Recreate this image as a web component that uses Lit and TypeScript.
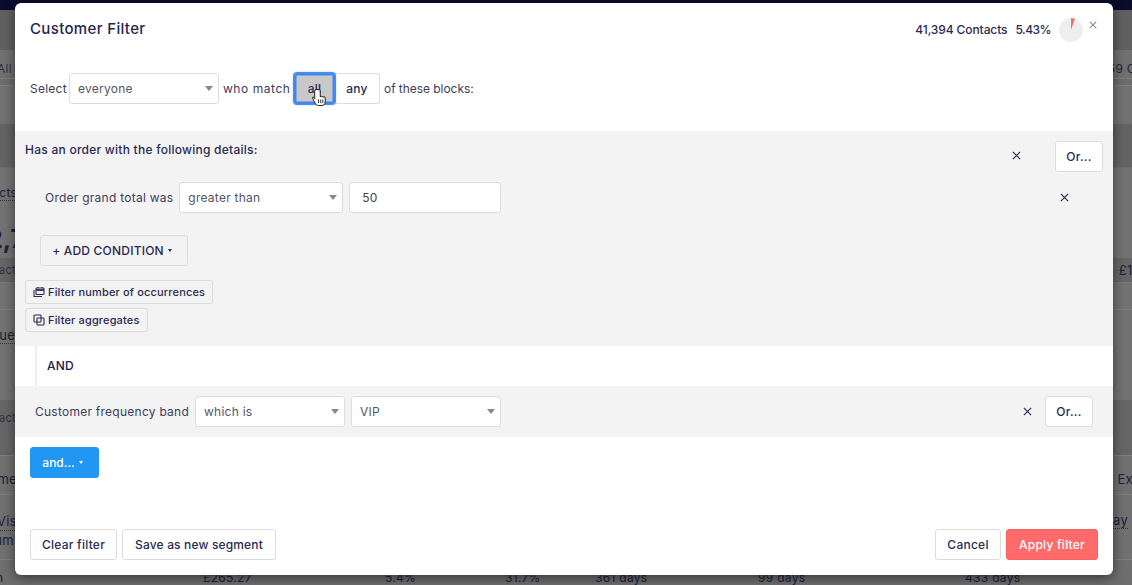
import { LitElement, html, css, svg } from "lit";
import { customElement } from "lit/decorators.js";

const closeIcon = (size = 9) => html`<svg class="x" width=${size} height=${size} viewBox="0 0 10 10"><path d="M1 1 9 9M9 1 1 9" fill="none" stroke="currentColor" stroke-width="1.3"/></svg>`;

@customElement("app-root")
export class AppRoot extends LitElement {
  static styles = css`
    :host { display: block; width: 1132px; height: 585px; overflow: hidden; position: relative; background: #6e6e6e;
      font-family: Inter, "Noto Sans", sans-serif; font-size: 12px; color: #2a2a55; }
    * { box-sizing: border-box; }
    .page { display: flex; flex-direction: column; height: 585px; color: #20203a; font-size: 12px; letter-spacing: .3px; }
    .r { display: flex; justify-content: space-between; align-items: center; flex: none; white-space: nowrap; border-bottom: 1px solid #7f7f7f; }
    .nav { height: 10px; background: #0b0b2b; border: 0; }
    .r1 { height: 40px; background: #606060; border: 0; }
    .r2 { height: 29px; background: #707070; padding-top: 8px; }
    .r3 { height: 7px; background: #6c6c6c; }
    .r4 { height: 38px; background: #727272; border: 0; }
    .r5 { height: 44px; background: #636363; border-color: #6c6c6c; }
    .r6 { height: 42px; background: #727272; padding-top: 8px; border: 0; }
    .r7 { height: 48px; background: #727272; font-size: 25px; font-weight: 700; padding-top: 10px; border: 0; letter-spacing: 0; }
    .r8 { height: 25px; background: #666; font-size: 11px; border-color: #767676; }
    .r9 { height: 27px; background: #727272; }
    .r10 { height: 36px; background: #727272; padding-top: 14px; border: 0; font-size: 13px; }
    .r11 { height: 54px; background: #727272; border: 0; }
    .r12 { height: 36px; background: #666; font-size: 11px; border: 0; }
    .r13 { height: 20px; background: #666; }
    .r14 { height: 39px; background: #707070; font-size: 13px; padding-top: 8px; }
    .r15 { height: 65px; background: #707070; font-size: 13px; align-items: flex-start; padding-top: 17px; }
    .two { display: flex; flex-direction: column; line-height: 18px; }
    .dot { border-bottom: 1px dotted #333; }
    .faint { color: #333340; }
    .l1 { margin-left: -3px; }
    .l2 { margin-left: -36px; }
    .l3 { margin-left: -29px; }
    .l4 { margin-left: -27px; }
    .l5 { margin-left: -40px; }
    .l6 { margin-left: -23px; }
    .l7 { margin-left: -3px; }
    .l8 { margin-left: -27px; }
    .r1c { margin-right: -48px; }
    .r2c { margin-right: -1px; }
    .r3c { margin-right: -30px; font-size: 13px; }
    .r4c { margin-right: 4px; }
    .bottom { display: grid; grid-template-columns: 203px 182px 120px 90px 163px 207px auto; height: 25px; align-items: center; padding-top: 10px; font-size: 12px; }
    .bl { margin-left: -4px; }

    .modal { position: absolute; left: 15px; top: 3px; width: 1098px; height: 572px; background: #fff; border-radius: 6px;
      box-shadow: 0 3px 12px rgba(0,0,0,.5); display: flex; flex-direction: column; font-weight: 400; letter-spacing: .25px; }
    .head { height: 52px; display: flex; align-items: center; padding: 0 16px 0 15px; flex: none; }
    h1 { margin: 0; font-size: 15px; line-height: 20px; font-weight: 500; color: #25254f; letter-spacing: .35px; }
    .stats { margin-left: auto; display: flex; align-items: center; font-weight: 500; font-size: 12px; color: #2a2a55; letter-spacing: -.1px; }
    .stats b { font-weight: 500; margin-right: 8px; }
    .stats b.pct { letter-spacing: -.5px; }
    .stats svg.pie { margin: 1px 0 0 0; }
    .close { color: #888; margin: -9px 0 0 6px; display: flex; }
    .line { display: flex; align-items: center; height: 31px; }
    .sel { display: flex; align-items: center; justify-content: space-between; height: 31px; background: #fff; border: 1px solid #dcdcdc;
      border-radius: 3px; padding: 0 5px 0 8px; color: #555566; flex: none; }
    .sel i { width: 0; height: 0; border: 4px solid transparent; border-top: 5px solid #888; border-bottom: 0; }
    .inp { padding: 0 8px 0 12px; justify-content: flex-start; color: #444; }
    .top { margin: 18px 0 27px 15px; }
    .w150 { width: 150px; }
    .w164 { width: 164px; }
    .w152 { width: 152px; }
    .lbl { color: #3c3c5c; }
    .select-l { margin-right: 3px; width: 36px; }
    .who { margin-left: 4px; width: 71px; letter-spacing: .55px; white-space: nowrap; }
    .of { margin-left: 4px; letter-spacing: -.05px; }
    button { font: inherit; letter-spacing: inherit; font-weight: 500; color: #2a2a55; background: #fff; border: 1px solid #dcdcdc; border-radius: 3px; height: 31px; padding: 0; flex: none; white-space: nowrap; }
    .all { width: 41px; background: #c8c8c8; border: 0; border-radius: 3px; box-shadow: inset 0 0 0 2.5px #4288ec, 0 0 0 1px #4a8fee, 0 0 3px #5a9bf0; color: #2a2a55; position: relative; z-index: 1; }
    .any { width: 45px; border-radius: 0 3px 3px 0; border-left: 0; }
    .gray { background: #f3f3f3; }
    .block1 { height: 215px; padding: 10px 10px 0 10px; flex: none; display: flex; flex-direction: column; }
    .b-title { display: flex; align-items: flex-start; height: 41px; }
    .b-title span { font-weight: 500; color: #2a2a55; margin-top: 1px; line-height: 16px; }
    .b-title .x { margin: 10px 34px 0 auto; color: #2a2a55; }
    .or { width: 48px; }
    .cond { padding-left: 20px; }
    .cond .lbl { margin-right: 6px; }
    .cond .x { margin: 0 34px 0 auto; color: #2a2a55; }
    .cond .sel { margin-right: 6px; }
    .add { width: 148px; margin: 22px 0 14px 15px; padding-right: 4px; background: transparent; display: flex; align-items: center; justify-content: center; font-size: 12px; letter-spacing: .2px; }
    .caret { display: inline-block; width: 0; height: 0; border: 2.5px solid transparent; border-top: 3px solid currentColor; border-bottom: 0; margin-left: 4px; }
    .mini { height: 24px; display: flex; align-items: center; background: transparent; font-size: 11px; padding: 0 7px; margin-bottom: 4px; width: fit-content; letter-spacing: .15px; }
    .mini svg { margin-right: 3px; }
    .and { height: 40px; margin-left: 20px; border-left: 2px solid #eee; padding: 0 0 2px 10px; display: flex; align-items: center; font-weight: 500; color: #20204a; flex: none; }
    .block2 { height: 51px; padding: 0 20px; display: flex; align-items: center; flex: none; }
    .block2 .lbl { margin-right: 6px; }
    .block2 .x { margin: 0 13px 0 auto; color: #2a2a55; }
    .block2 .sel + .sel { margin-left: 6px; }
    .andbtn { width: 69px; margin: 10px 0 0 15px; padding-right: 4px; background: #2196f3; color: #fff; border-color: #2196f3; display: flex; align-items: center; justify-content: center; letter-spacing: 0; }
    .foot { margin: auto 15px 15px 15px; display: flex; }
    .foot button { font-size: 12px; }
    .clear { width: 87px; margin-right: 5px; }
    .save { width: 154px; letter-spacing: .15px; }
    .cancel { width: 66px; margin-left: auto; margin-right: 5px; }
    .apply { width: 92px; background: #ff6b6b; color: #fff; border-color: #f76262; }
    .cursor { position: absolute; left: 312px; top: 88px; z-index: 5; }
  `;

  private selectBox(text: string, cls: string) {
    return html`<div class="sel ${cls}"><span>${text}</span><i></i></div>`;
  }

  private background() {
    return html`<div class="page">
      <div class="r nav"></div>
      <div class="r r1"></div>
      <div class="r r2"><span class="l1 faint">All contacts</span><span class="r1c">359 Contacts</span></div>
      <div class="r r3"></div>
      <div class="r r4"></div>
      <div class="r r5"></div>
      <div class="r r6"><span class="l2 dot">Contacts</span></div>
      <div class="r r7"><span class="l3">£2,7</span></div>
      <div class="r r8"><span class="l4 faint">Contact</span><span class="r3c">£1,204</span></div>
      <div class="r r9"></div>
      <div class="r r10"><span class="l5 dot">Revenue</span></div>
      <div class="r r11"></div>
      <div class="r r12"><span class="l4 faint">Contact</span></div>
      <div class="r r13"></div>
      <div class="r r14"><span class="l6">Frame</span><span class="r2c">Ex</span></div>
      <div class="r r15"><span class="two"><span class="l7 dot">Visit</span><span class="l8">Column</span></span><span class="r4c dot">Delay</span></div>
      <div class="bottom"><span class="bl">n</span><span>£265.27</span><span>5.4%</span><span>31.7%</span><span>361 days</span><span>99 days</span><span>433 days</span></div>
    </div>`;
  }

  render() {
    return html`
      ${this.background()}
      <div class="modal">
        <div class="head">
          <h1>Customer Filter</h1>
          <div class="stats">
            <b>41,394 Contacts</b><b class="pct">5.43%</b>
            <svg class="pie" width="24" height="24" viewBox="0 0 24 24">
              <circle cx="12" cy="12" r="12" fill="#eeeeee"/>
              ${svg`<path d="M12 12 12 0 16 .7Z" fill="#ff6b6b"/>`}
            </svg>
            <span class="close">${closeIcon(8)}</span>
          </div>
        </div>
        <div class="line top">
          <span class="lbl select-l">Select</span>
          ${this.selectBox("everyone", "w150")}
          <span class="lbl who">who match</span>
          <button class="all">all</button><button class="any">any</button>
          <span class="lbl of">of these blocks:</span>
        </div>
        <div class="gray block1">
          <div class="b-title"><span>Has an order with the following details:</span>${closeIcon()}<button class="or">Or...</button></div>
          <div class="line cond">
            <span class="lbl">Order grand total was</span>
            ${this.selectBox("greater than", "w164")}
            <div class="sel inp w152">50</div>
            ${closeIcon()}
          </div>
          <button class="add">+ ADD CONDITION<span class="caret"></span></button>
          <button class="mini">
            <svg width="12" height="12" viewBox="0 0 12 12" fill="none" stroke="#2a2a55" stroke-width="1.1"><path d="M1 4v6.5h8"/><rect x="3" y="2" width="8" height="6.5" rx=".8"/><path d="M3 4h8" stroke-width="1.8"/><path d="M5 1v1M9 1v1"/></svg>
            Filter number of occurrences
          </button>
          <button class="mini">
            <svg width="12" height="12" viewBox="0 0 12 12" fill="none" stroke="#2a2a55" stroke-width="1.1"><rect x="1" y="1" width="7" height="7" rx=".8"/><rect x="4" y="4" width="7" height="7" rx=".8"/></svg>
            Filter aggregates
          </button>
        </div>
        <div class="and">AND</div>
        <div class="gray block2">
          <span class="lbl">Customer frequency band</span>
          ${this.selectBox("which is", "w150")}
          ${this.selectBox("VIP", "w150")}
          ${closeIcon()}
          <button class="or">Or...</button>
        </div>
        <button class="andbtn">and...<span class="caret"></span></button>
        <div class="foot">
          <button class="clear">Clear filter</button>
          <button class="save">Save as new segment</button>
          <button class="cancel">Cancel</button>
          <button class="apply">Apply filter</button>
        </div>
      </div>
      <svg class="cursor" width="15" height="19" viewBox="0 0 16 20">
        <path d="M4.2 1.5c-.9 0-1.3.7-1.3 1.4v8.3L1.7 9.9c-.7-.7-1.6-.5-1.2.6.8 2 2.3 4.4 3.2 6 .6 1.2 1.5 2 3.2 2h3.6c2.2 0 3.6-1.5 3.6-3.7v-4.6c0-1-1.3-1.2-1.6-.3 0-1.1-1.5-1.3-1.8-.3 0-1.1-1.6-1.2-1.9-.2V3c0-.8-.5-1.5-1.3-1.5z" fill="#fff" stroke="#111" stroke-width="1"/>
        <path d="M7 12v4M9.3 12v4M11.5 12v4" stroke="#111" stroke-width=".9"/>
      </svg>
    `;
  }
}
